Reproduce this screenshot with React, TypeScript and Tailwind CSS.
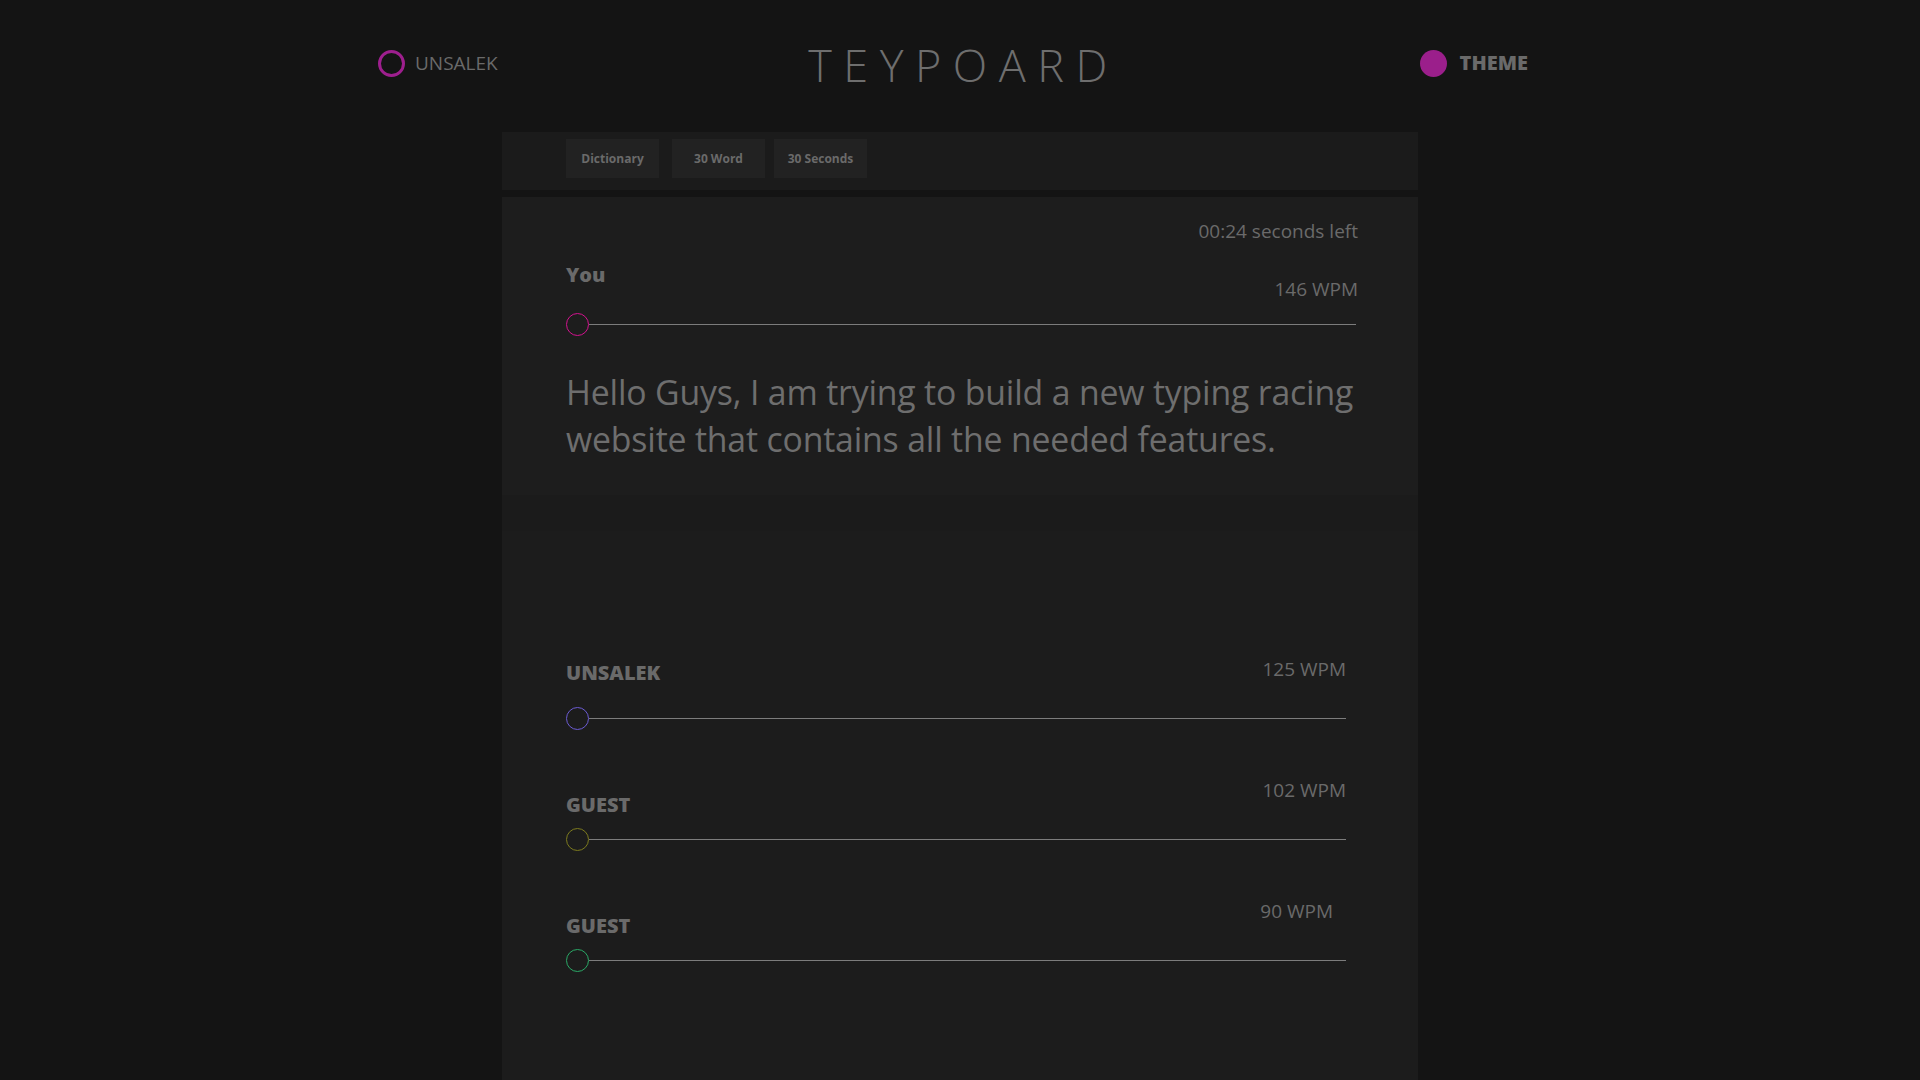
import React from 'react'

const players = [
  { name: 'UNSALEK', wpm: 125, ring: 'border-[#6b5bd2]', labelTop: 'mt-[4px]', wpmRight: 'mr-0' },
  { name: 'GUEST', wpm: 102, ring: 'border-[#7c7a1e]', labelTop: 'mt-[15px]', wpmRight: 'mr-0' },
  { name: 'GUEST', wpm: 90, ring: 'border-[#2aa866]', labelTop: 'mt-[15px]', wpmRight: 'mr-[13px]' },
]

function Track({ ring, className = '' }: { ring: string; className?: string }) {
  return (
    <div className={`flex items-center h-[24px] ${className}`}>
      <div className={`w-[23px] h-[23px] rounded-full border-[1.5px] shrink-0 ${ring}`} />
      <div className="flex-1 h-px bg-[#7c7c7c]" />
    </div>
  )
}

export default function App() {
  return (
    <div className="min-h-screen bg-[#141414] font-['Open_Sans',sans-serif] text-[#6a6a6a] overflow-hidden">
      {/* Header */}
      <header className="ml-[378px] w-[1150px] h-[126px] grid grid-cols-3 items-center">
        <div className="flex items-center gap-[10px]">
          <div className="w-[27px] h-[27px] rounded-full border-[3px] border-[#9e1f8e]" />
          <span className="text-[19px] leading-[24px]">UNSALEK</span>
        </div>
        <h1 className="text-center text-[45px] font-light tracking-[11.5px] leading-none pl-[21px] pt-[3px] text-[#6e6e6e]">
          TEYPOARD
        </h1>
        <div className="flex items-center justify-end gap-[13px]">
          <div className="w-[27px] h-[27px] rounded-full bg-[#9b1f8b]" />
          <span className="text-[20px] leading-[24px] font-extrabold">THEME</span>
        </div>
      </header>

      <main className="w-[916px] mx-auto">
        {/* Mode tabs */}
        <div className="mt-[6px] h-[58px] bg-[#1b1b1b] pt-[7px] pl-[64px] flex">
          <button className="h-[39px] w-[93px] bg-[#222222] text-[12px] font-bold text-[#6a6a6a]">Dictionary</button>
          <button className="ml-[13px] h-[39px] w-[93px] bg-[#222222] text-[12px] font-bold text-[#6a6a6a]">30 Word</button>
          <button className="ml-[9px] h-[39px] w-[93px] bg-[#222222] text-[12px] font-bold text-[#6a6a6a]">30 Seconds</button>
        </div>

        {/* Race panel */}
        <section className="mt-[7px] min-h-[883px] bg-[#1c1c1c]">
          <div className="bg-[#1d1d1d] pt-[22px] pb-[32px] pl-[64px] pr-[60px]">
            <p className="text-right text-[19px] leading-[24px]">00:24 seconds left</p>

            <div className="mt-[20px] h-[49px] flex justify-between items-start">
              <span className="text-[20px] leading-[24px] font-extrabold">You</span>
              <span className="mt-[14px] text-[19px] leading-[24px]">146 WPM</span>
            </div>
            <Track ring="border-[#d3128f]" className="mr-[2px]" />

            <p className="mt-[33px] text-[33.8px] leading-[47px] tracking-[-0.005em] text-[#6e6e6e]">
              Hello Guys, I am trying to build a new typing racing website that contains all the needed features.
            </p>
          </div>
          <div className="h-[36px] bg-[#1b1b1b]" />

          <div className="mt-[126px] pl-[64px] pr-[72px]">
            {players.map((p, i) => (
              <div key={i} className={i > 0 ? 'mt-[48px]' : ''}>
                <div className="h-[49px] flex justify-between items-start">
                  <span className={`text-[20px] leading-[24px] font-extrabold ${p.labelTop}`}>{p.name}</span>
                  <span className={`text-[19px] leading-[24px] ${p.wpmRight}`}>{p.wpm} WPM</span>
                </div>
                <Track ring={p.ring} />
              </div>
            ))}
          </div>
        </section>
      </main>
    </div>
  )
}
